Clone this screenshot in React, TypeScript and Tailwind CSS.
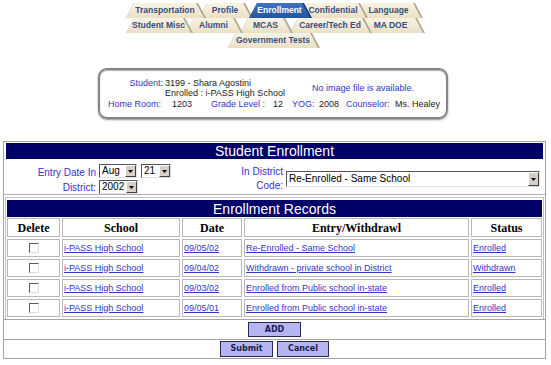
import React from "react";

const sans = "font-['Liberation_Sans',Arial,sans-serif]";
const shape = "[clip-path:polygon(8px_0,calc(100%_-_8px)_0,100%_100%,0_100%)]";

type Tab = { label: string; cls: string; active?: boolean };

const tabRows: { pad: string; tabs: Tab[] }[] = [
    {
        pad: "pl-[126px] pt-[3px]",
        tabs: [
            { label: "Transportation", cls: "w-[80px] z-[9]" },
            { label: "Profile", cls: "w-[54px] -ml-[7px] z-[8]" },
            { label: "Enrollment", cls: "w-[63px] -ml-[4px] z-[20]", active: true },
            { label: "Confidential", cls: "w-[68px] -ml-[12px] z-[6]" },
            { label: "Language", cls: "w-[67px] -ml-[12px] z-[5]" },
        ],
    },
    {
        pad: "pl-[126px]",
        tabs: [
            { label: "Student Misc", cls: "w-[67px] z-[9]" },
            { label: "Alumni", cls: "w-[57px] -ml-[7px] z-[8]" },
            { label: "MCAS", cls: "w-[53px] -ml-[3px] z-[7]" },
            { label: "Career/Tech Ed", cls: "w-[82px] -ml-[3px] z-[6]" },
            { label: "MA DOE", cls: "w-[67px] -ml-[14px] z-[5]" },
        ],
    },
    {
        pad: "pl-[228px]",
        tabs: [{ label: "Government Tests", cls: "w-[92px] z-[9]" }],
    },
];

const records = [
    { date: "09/05/02", entry: "Re-Enrolled - Same School", status: "Enrolled" },
    { date: "09/04/02", entry: "Withdrawn - private school in District", status: "Withdrawn" },
    { date: "09/03/02", entry: "Enrolled from Public school in-state", status: "Enrolled" },
    { date: "09/05/01", entry: "Enrolled from Public school in-state", status: "Enrolled" },
];

function TabShape({ t }: { t: Tab }) {
    return (
        <div className={`relative h-[15px] shrink-0 ${shape} ${t.active ? "bg-[#173e7e]" : "bg-[#b3a890]"} ${t.cls}`}>
            <div
                className={`mr-[2px] flex h-full items-center justify-center ${shape} ${t.active ? "bg-linear-to-b from-[#4274bd] to-[#2456a0] text-white" : "bg-linear-to-b from-[#f9f3e4] to-[#ebe0c5] text-[#34507e]"} ${sans} text-[8.5px] font-bold leading-none`}
            >
                {t.label}
            </div>
        </div>
    );
}

function Select({ value, cls }: { value: string; cls: string }) {
    return (
        <div className={`flex border border-t-[#555] border-l-[#555] border-b-[#e2e2e2] border-r-[#e2e2e2] bg-white ${cls}`}>
            <span className="flex-1 self-center pl-[2px] text-[10px] leading-none text-black">{value}</span>
            <span className="flex w-[11px] items-center justify-center border border-t-white border-l-white border-b-[#404040] border-r-[#404040] bg-[#d4d0c8]">
                <svg width="5" height="3" viewBox="0 0 5 3">
                    <path d="M0 0h5L2.5 3z" fill="#000" />
                </svg>
            </span>
        </div>
    );
}

function Btn({ label, cls }: { label: string; cls: string }) {
    return (
        <button
            type="button"
            className={`border border-[#2a2a55] bg-[#b5b5f1] font-['DejaVu_Sans',sans-serif] text-[8px] font-bold leading-none text-[#1c1c50] ${cls}`}
        >
            {label}
        </button>
    );
}

export default function App() {
    const cell = "flex h-[18px] items-center border border-[#b8b8b8]";
    const link = "pl-[1px] text-[9px] leading-none text-[#3333cc] underline";

    return (
        <div className={`h-[365px] w-[551px] bg-white ${sans}`}>
            {/* tabs */}
            {tabRows.map((row, i) => (
                <div key={i} className={`flex ${row.pad}`}>
                    {row.tabs.map((t) => (
                        <TabShape key={t.label} t={t} />
                    ))}
                </div>
            ))}

            {/* student info */}
            <div className="ml-[98px] mt-[20px] h-[51px] w-[350px] rounded-[9px] border-2 border-[#858585] pt-[8px] text-[9px] leading-[10px] text-[#1a1a1a] shadow-[0_1px_2px_rgba(0,0,0,0.45),inset_0_1px_1px_rgba(0,0,0,0.3)]">
                <div className="flex">
                    <div className="w-[212px]">
                        <div className="flex">
                            <span className="w-[63px] text-right text-[#3333cc]">Student:</span>
                            <span className="ml-[2px]">3199 - Shara Agostini</span>
                        </div>
                        <div className="pl-[65px]">Enrolled : i-PASS High School</div>
                    </div>
                    <div className="self-center text-[#3333cc]">No image file is available.</div>
                </div>
                <div className="mt-[1px] flex pl-[8px]">
                    <span className="w-[64px] text-[#3333cc]">Home Room:</span>
                    <span className="w-[39px]">1203</span>
                    <span className="w-[62px] text-[#3333cc]">Grade Level :</span>
                    <span className="w-[19px]">12</span>
                    <span className="w-[27px] text-[#3333cc]">YOG:</span>
                    <span className="w-[27px]">2008</span>
                    <span className="w-[49px] text-[#3333cc]">Counselor:</span>
                    <span>Ms. Healey</span>
                </div>
            </div>

            {/* enrollment panel */}
            <div className="ml-[3px] mt-[22px] w-[543px] border border-[#a4a4a4]">
                <div className="border-b border-[#b0b0b0] px-[2px] pt-[1px]">
                    <div className="flex h-[16px] items-center justify-center bg-[#000066] text-[14px] leading-none text-white">
                        Student Enrollment
                    </div>
                    <div className="flex h-[35px]">
                        <div className="flex w-[233px]">
                            <div className="w-[90px] pt-[6px] text-right text-[10px] leading-[15px] text-[#3333cc]">
                                <div>Entry Date In</div>
                                <div>District:</div>
                            </div>
                            <div className="ml-[3px] pt-[5px]">
                                <div className="flex gap-[4px]">
                                    <Select value="Aug" cls="h-[14px] w-[38px]" />
                                    <Select value="21" cls="h-[14px] w-[30px]" />
                                </div>
                                <Select value="2002" cls="mt-[2px] h-[14px] w-[39px]" />
                            </div>
                        </div>
                        <div className="w-[44px] pt-[6px] text-right text-[10px] leading-[14px] text-[#3333cc]">
                            <div>In District</div>
                            <div>Code:</div>
                        </div>
                        <Select value="Re-Enrolled - Same School" cls="ml-[3px] mt-[12px] h-[16px] w-[254px]" />
                    </div>
                </div>

                <div className="mx-[1px] mt-[2px] border-x border-t border-[#c0c0c0] px-[1px] pb-[2px] pt-[2px]">
                    <div className="flex h-[17px] items-center justify-center bg-[#000066] text-[14px] leading-none text-white">
                        Enrollment Records
                    </div>
                    <div className="mt-[1px] grid h-[19px] grid-cols-[53px_118px_60px_225px_71px] gap-x-[2px] font-['Liberation_Serif',serif] text-[12px] font-bold leading-none text-black">
                        {["Delete", "School", "Date", "Entry/Withdrawl", "Status"].map((h) => (
                            <div key={h} className="flex items-center justify-center border border-[#b8b8b8]">
                                {h}
                            </div>
                        ))}
                    </div>
                    {records.map((r, i) => (
                        <div key={i} className="mt-[2px] grid grid-cols-[53px_118px_60px_225px_71px] gap-x-[2px]">
                            <div className={`${cell} justify-center`}>
                                <span className="h-[10px] w-[10px] border border-t-[#5a5a5a] border-l-[#5a5a5a] border-b-[#dcdcdc] border-r-[#dcdcdc] bg-white" />
                            </div>
                            <div className={cell}>
                                <a className={link}>i-PASS High School</a>
                            </div>
                            <div className={cell}>
                                <a className={link}>{r.date}</a>
                            </div>
                            <div className={cell}>
                                <a className={link}>{r.entry}</a>
                            </div>
                            <div className={cell}>
                                <a className={link}>{r.status}</a>
                            </div>
                        </div>
                    ))}
                </div>

                <div className="flex h-[20px] items-center justify-center border-t border-[#a4a4a4]">
                    <Btn label="ADD" cls="h-[15px] w-[53px]" />
                </div>
                <div className="flex h-[19px] items-center justify-center gap-[4px] border-t border-[#a4a4a4]">
                    <Btn label="Submit" cls="h-[16px] w-[53px]" />
                    <Btn label="Cancel" cls="h-[16px] w-[52px]" />
                </div>
            </div>
        </div>
    );
}
